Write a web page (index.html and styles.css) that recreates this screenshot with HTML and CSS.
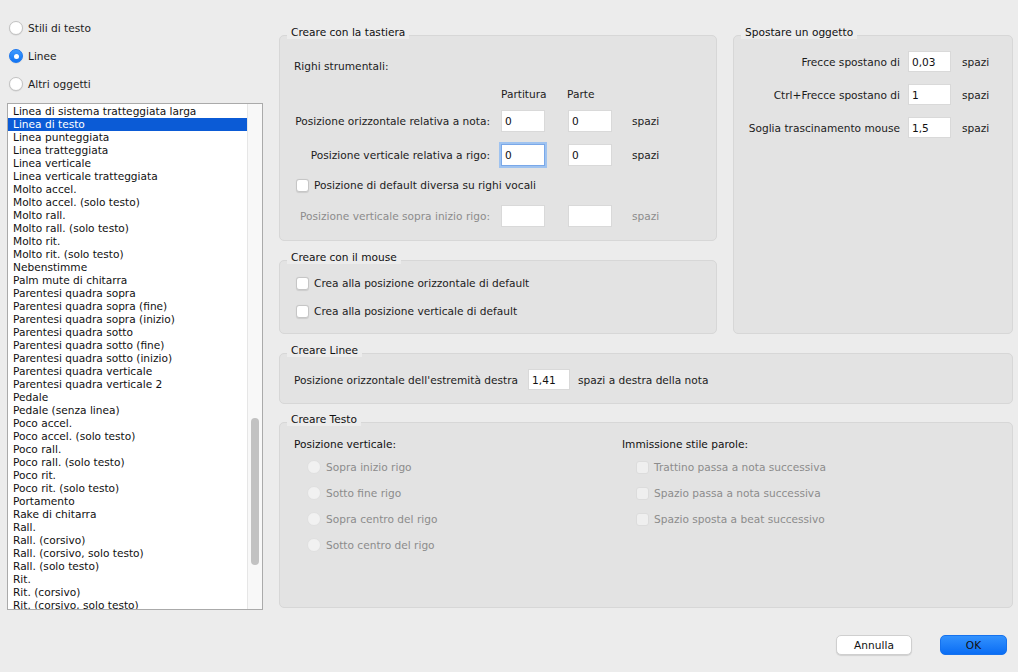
FILE: index.html
```html
<!DOCTYPE html>
<html lang="it">
<head>
<meta charset="utf-8">
<title>Preferenze</title>
<link rel="stylesheet" href="styles.css">
</head>
<body>
<div class="window">
  <div class="left">
    <div class="radios">
      <div class="radio-row"><span class="radio"></span><span>Stili di testo</span></div>
      <div class="radio-row"><span class="radio on"></span><span>Linee</span></div>
      <div class="radio-row"><span class="radio"></span><span>Altri oggetti</span></div>
    </div>
    <div class="list">
      <div class="items">
        <div class="item">Linea di sistema tratteggiata larga</div>
        <div class="item sel">Linea di testo</div>
        <div class="item">Linea punteggiata</div>
        <div class="item">Linea tratteggiata</div>
        <div class="item">Linea verticale</div>
        <div class="item">Linea verticale tratteggiata</div>
        <div class="item">Molto accel.</div>
        <div class="item">Molto accel. (solo testo)</div>
        <div class="item">Molto rall.</div>
        <div class="item">Molto rall. (solo testo)</div>
        <div class="item">Molto rit.</div>
        <div class="item">Molto rit. (solo testo)</div>
        <div class="item">Nebenstimme</div>
        <div class="item">Palm mute di chitarra</div>
        <div class="item">Parentesi quadra sopra</div>
        <div class="item">Parentesi quadra sopra (fine)</div>
        <div class="item">Parentesi quadra sopra (inizio)</div>
        <div class="item">Parentesi quadra sotto</div>
        <div class="item">Parentesi quadra sotto (fine)</div>
        <div class="item">Parentesi quadra sotto (inizio)</div>
        <div class="item">Parentesi quadra verticale</div>
        <div class="item">Parentesi quadra verticale 2</div>
        <div class="item">Pedale</div>
        <div class="item">Pedale (senza linea)</div>
        <div class="item">Poco accel.</div>
        <div class="item">Poco accel. (solo testo)</div>
        <div class="item">Poco rall.</div>
        <div class="item">Poco rall. (solo testo)</div>
        <div class="item">Poco rit.</div>
        <div class="item">Poco rit. (solo testo)</div>
        <div class="item">Portamento</div>
        <div class="item">Rake di chitarra</div>
        <div class="item">Rall.</div>
        <div class="item">Rall. (corsivo)</div>
        <div class="item">Rall. (corsivo, solo testo)</div>
        <div class="item">Rall. (solo testo)</div>
        <div class="item">Rit.</div>
        <div class="item">Rit. (corsivo)</div>
        <div class="item">Rit. (corsivo, solo testo)</div>
      </div>
      <div class="scroll"><div class="thumb"></div></div>
    </div>
  </div>

  <div class="right">
    <div class="toprow">
      <div class="col1">
        <div class="group">
          <div class="gtitle">Creare con la tastiera</div>
          <div class="gbox g1">
            <div class="subhead">Righi strumentali:</div>
            <div class="frow head"><span class="lbl"></span><span class="colh">Partitura</span><span class="colh">Parte</span></div>
            <div class="frow r1"><span class="lbl">Posizione orizzontale relativa a nota:</span><input class="field" value="0"><input class="field f2" value="0"><span class="unit">spazi</span></div>
            <div class="frow r2"><span class="lbl">Posizione verticale relativa a rigo:</span><input class="field focus" value="0"><input class="field f2" value="0"><span class="unit">spazi</span></div>
            <div class="cbrow r3"><span class="check"></span><span>Posizione di default diversa su righi vocali</span></div>
            <div class="frow r4 dis"><span class="lbl">Posizione verticale sopra inizio rigo:</span><input class="field" value=""><input class="field f2" value=""><span class="unit">spazi</span></div>
          </div>
        </div>
        <div class="group g-mouse">
          <div class="gtitle">Creare con il mouse</div>
          <div class="gbox g3">
            <div class="cbrow"><span class="check"></span><span>Crea alla posizione orizzontale di default</span></div>
            <div class="cbrow second"><span class="check"></span><span>Crea alla posizione verticale di default</span></div>
          </div>
        </div>
      </div>
      <div class="col2">
        <div class="group tall">
          <div class="gtitle">Spostare un oggetto</div>
          <div class="gbox g2">
            <div class="srow"><span class="slbl">Frecce spostano di</span><input class="field sf" value="0,03"><span>spazi</span></div>
            <div class="srow"><span class="slbl">Ctrl+Frecce spostano di</span><input class="field sf" value="1"><span>spazi</span></div>
            <div class="srow"><span class="slbl">Soglia trascinamento mouse</span><input class="field sf" value="1,5"><span>spazi</span></div>
          </div>
        </div>
      </div>
    </div>

    <div class="group g-lines">
      <div class="gtitle">Creare Linee</div>
      <div class="gbox g4">
        <span class="l4">Posizione orizzontale dell'estremità destra</span><input class="field lf" value="1,41"><span>spazi a destra della nota</span>
      </div>
    </div>

    <div class="group g-text">
      <div class="gtitle">Creare Testo</div>
      <div class="gbox g5">
        <div class="tcol left-col">
          <div class="thead">Posizione verticale:</div>
          <div class="trow dis"><span class="radio disr"></span><span>Sopra inizio rigo</span></div>
          <div class="trow dis"><span class="radio disr"></span><span>Sotto fine rigo</span></div>
          <div class="trow dis"><span class="radio disr"></span><span>Sopra centro del rigo</span></div>
          <div class="trow dis"><span class="radio disr"></span><span>Sotto centro del rigo</span></div>
        </div>
        <div class="tcol right-col">
          <div class="thead">Immissione stile parole:</div>
          <div class="trow dis"><span class="check disc"></span><span>Trattino passa a nota successiva</span></div>
          <div class="trow dis"><span class="check disc"></span><span>Spazio passa a nota successiva</span></div>
          <div class="trow dis"><span class="check disc"></span><span>Spazio sposta a beat successivo</span></div>
        </div>
      </div>
    </div>

    <div class="buttons">
      <button class="btn cancel">Annulla</button>
      <button class="btn ok">OK</button>
    </div>
  </div>
</div>
</body>
</html>
```
FILE: styles.css
```css
* { box-sizing: border-box; }
html, body { margin: 0; padding: 0; }
body {
  width: 1018px;
  height: 672px;
  background: #ececec;
  font-family: "DejaVu Sans", "Liberation Sans", sans-serif;
  font-size: 10.6px;
  color: #1c1c1c;
  overflow: hidden;
}
.window { display: flex; height: 672px; }

/* left column */
.left { width: 263px; flex: none; padding: 21px 0 0 7px; }
.radios { display: flex; flex-direction: column; gap: 14px; }
.radio-row { display: flex; align-items: center; height: 14px; margin-left: 2px; white-space: nowrap; }
.radio {
  width: 14px; height: 14px; flex: none;
  border-radius: 50%;
  background: #fff;
  border: 1px solid #c3c3c3;
  box-shadow: 0 0.5px 1px rgba(0,0,0,0.12);
  margin-right: 5px;
}
.radio.on {
  background: linear-gradient(#3f9bff, #1173f2);
  border-color: #1b77ef;
  display: flex; align-items: center; justify-content: center;
}
.radio.on::after { content: ""; width: 5px; height: 5px; border-radius: 50%; background: #fff; }

.list {
  width: 256px; height: 507px;
  margin-top: 12px;
  border: 1px solid #aaaaaa;
  background: #fff;
  display: flex;
  overflow: hidden;
}
.items { flex: 1; padding-top: 1px; overflow: hidden; }
.item { height: 13px; line-height: 13px; padding-left: 5px; white-space: nowrap; color: #111; }
.item.sel { background: #0b5bd6; color: #fff; }
.scroll {
  width: 15px; flex: none;
  background: #f8f8f8;
  border-left: 1px solid #e6e6e6;
  padding: 314px 0 0 3px;
}
.thumb { width: 8px; height: 147px; border-radius: 4px; background: #c2c2c2; }

/* right area */
.right { flex: 1; padding: 25px 5px 0 16px; display: flex; flex-direction: column; }
.toprow { display: flex; gap: 16px; }
.col1 { width: 438px; flex: none; display: flex; flex-direction: column; }
.col2 { width: 280px; flex: none; display: flex; flex-direction: column; }

.group { display: flex; flex-direction: column; }
.group.tall { flex: 1; }
.group.tall .gbox { flex: 1; }
.gtitle {
  align-self: flex-start;
  height: 14px; line-height: 14px;
  margin-left: 8px; padding: 0 4px;
  background: #ececec;
  position: relative; z-index: 1;
  white-space: nowrap;
  color: #111;
}
.gbox {
  margin-top: -4px;
  background: #e3e3e3;
  border: 1px solid #d7d7d7;
  border-radius: 5px;
}

.field {
  height: 22px;
  border: 1px solid #d9d9d9;
  background: #fff;
  padding: 0 3px;
  font: inherit;
  color: #111;
  outline: none;
  margin: 0;
  flex: none;
}
.field.focus { border-color: #7aa8e8; box-shadow: 0 0 0 2px #9fc3f0; }

/* group 1 */
.g1 { padding: 23px 0 13px 14px; }
.subhead { height: 14px; line-height: 14px; }
.frow { display: flex; align-items: center; white-space: nowrap; }
.lbl { width: 196px; flex: none; text-align: right; margin-right: 11px; }
.head { margin-top: 14px; height: 14px; }
.colh { width: 44px; margin-right: 22px; }
.frow .field { width: 44px; margin-right: 23px; }
.frow .field.f2 { margin-right: 20px; }
.r1 { margin-top: 9px; }
.r2 { margin-top: 12px; }
.r3 { margin-top: 12px; margin-left: 2px; }
.r4 { margin-top: 13px; }
.dis { color: #8c8c8c; }

.cbrow { display: flex; align-items: center; height: 14px; white-space: nowrap; }
.check {
  width: 13px; height: 13px; flex: none;
  background: #fff;
  border: 1px solid #c6c6c6;
  border-radius: 3px;
  box-shadow: 0 0.5px 1px rgba(0,0,0,0.1);
  margin-right: 5px;
}

/* group 3 */
.g-mouse { margin-top: 9px; }
.g3 { padding: 15px 0 15px 16px; }
.g3 .second { margin-top: 14px; }

/* group 2 */
.g2 { padding-top: 15px; }
.srow { display: flex; align-items: center; height: 21px; margin-bottom: 12px; white-space: nowrap; }
.slbl { width: 166px; flex: none; text-align: right; margin-right: 8px; }
.field.sf { width: 43px; height: 21px; margin-right: 11px; }

/* group 4 */
.g-lines { margin-top: 9px; }
.g4 { padding: 15px 0 13px 14px; display: flex; align-items: center; white-space: nowrap; }
.l4 { margin-right: 10px; }
.field.lf { width: 42px; height: 21px; margin-right: 8px; }

/* group 5 */
.g-text { margin-top: 8px; }
.g5 { padding: 14px 0 55px 14px; display: flex; }
.tcol { display: flex; flex-direction: column; }
.left-col { width: 328px; flex: none; }
.thead { height: 14px; line-height: 14px; color: #111; }
.trow { display: flex; align-items: center; height: 14px; margin-top: 12px; white-space: nowrap; }
.thead + .trow { margin-top: 9px; }
.left-col .trow { padding-left: 13px; }
.right-col .trow { padding-left: 14px; }
.radio.disr { background: #f1f1f1; border-color: #e0e0e0; box-shadow: none; }
.check.disc { background: #efefef; border-color: #dcdcdc; box-shadow: none; }

/* buttons */
.buttons { display: flex; justify-content: flex-end; gap: 28px; margin-top: 27px; padding-right: 6px; }
.btn {
  height: 20px;
  border-radius: 5px;
  font: inherit;
  color: #111;
  padding: 0;
  margin: 0;
}
.cancel {
  width: 76px;
  background: #fff;
  border: 1px solid #cfcfcf;
  box-shadow: 0 1px 1px rgba(0,0,0,0.12);
}
.ok {
  width: 67px;
  background: linear-gradient(#3392fe, #0a6df4);
  border: 1px solid #1672ee;
}
```
